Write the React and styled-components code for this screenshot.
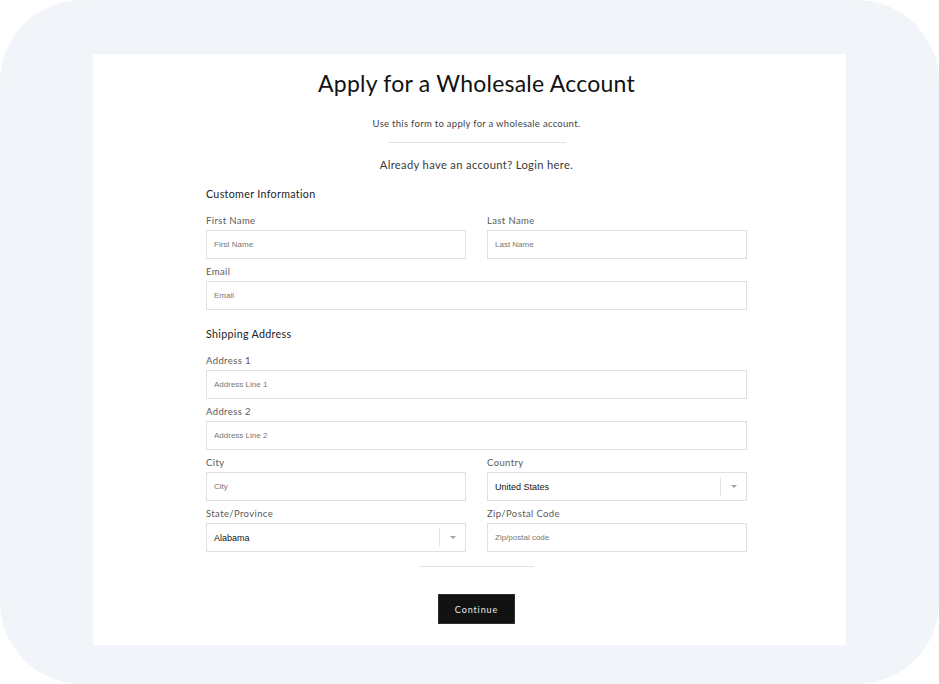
import styled, { createGlobalStyle } from "styled-components";

const GlobalStyle = createGlobalStyle`
  * { box-sizing: border-box; }
  body {
    margin: 0;
    background: #ffffff;
    font-family: Lato, "Open Sans", sans-serif;
  }
`;

const Frame = styled.div`
  width: 939px;
  height: 684px;
  background: #f1f4f8;
  border-radius: 82px;
  padding: 54px 93px 39px 93px;
`;

const Card = styled.main`
  height: 100%;
  background: #ffffff;
  padding: 14px 99px 0 113px;
  display: flex;
  flex-direction: column;
`;

const Header = styled.header`
  display: flex;
  flex-direction: column;
  align-items: center;
`;

const Title = styled.h1`
  margin: 0;
  font-size: 23px;
  line-height: 30px;
  font-weight: 400;
  color: #121212;
  letter-spacing: 0.01em;
`;

const Subtitle = styled.p`
  margin: 19px 0 0;
  font-size: 9.5px;
  line-height: 14px;
  color: #444;
  letter-spacing: 0.03em;
`;

const Divider = styled.hr`
  width: ${(p) => p.$w}px;
  margin: ${(p) => p.$m};
  border: 0;
  border-top: 1px solid #e3e3e3;
`;

const LoginText = styled.p`
  margin: 0;
  font-size: 11.2px;
  line-height: 16px;
  color: #3a3a3a;
  letter-spacing: 0.03em;
`;

const Form = styled.form`
  display: flex;
  flex-direction: column;
`;

const SectionTitle = styled.h2`
  margin: ${(p) => p.$top}px 0 12px;
  font-size: 10.7px;
  line-height: 16px;
  font-weight: 400;
  color: #222;
  letter-spacing: 0.03em;
`;

const Grid = styled.div`
  display: grid;
  grid-template-columns: 1fr 1fr;
  column-gap: 21px;
  row-gap: 6px;
`;

const Field = styled.label`
  display: flex;
  flex-direction: column;
  gap: 2px;
  grid-column: ${(p) => (p.$wide ? "1 / -1" : "auto")};
`;

const LabelText = styled.span`
  font-size: 9.5px;
  line-height: 14px;
  color: #5a5a5a;
  letter-spacing: 0.04em;
`;

const Input = styled.input`
  height: 29px;
  width: 100%;
  border: 1px solid #e0e0e0;
  border-radius: 0;
  padding: 0 7px;
  font-family: "Liberation Sans", Arial, sans-serif;
  font-size: 8px;
  color: #121212;
  background: #fff;
  outline: none;

  &::placeholder {
    color: #777;
  }
`;

const SelectBox = styled.div`
  height: 29px;
  border: 1px solid #e0e0e0;
  display: flex;
  align-items: center;
  padding-left: 7px;
  font-family: "Liberation Sans", Arial, sans-serif;
  font-size: 9px;
  color: #121212;
`;

const SelectValue = styled.span`
  flex: 1;
`;

const SelectControl = styled.span`
  width: 26px;
  height: 19px;
  border-left: 1px solid #e2e2e2;
  display: flex;
  align-items: center;
  justify-content: center;
`;

const Caret = styled.span`
  width: 0;
  height: 0;
  border-left: 3px solid transparent;
  border-right: 3px solid transparent;
  border-top: 3px solid #a0a0a0;
`;

const Actions = styled.div`
  display: flex;
  flex-direction: column;
  align-items: center;
`;

const Button = styled.button`
  width: 77px;
  height: 30px;
  background: #121212;
  border: 1px solid #2e2e2e;
  color: #e8e8e8;
  font-family: Lato, "Open Sans", sans-serif;
  font-size: 9px;
  letter-spacing: 0.1em;
  cursor: pointer;
`;

const TextField = ({ label, placeholder, wide }) => (
  <Field $wide={wide}>
    <LabelText>{label}</LabelText>
    <Input placeholder={placeholder} />
  </Field>
);

const SelectField = ({ label, value }) => (
  <Field>
    <LabelText>{label}</LabelText>
    <SelectBox>
      <SelectValue>{value}</SelectValue>
      <SelectControl>
        <Caret />
      </SelectControl>
    </SelectBox>
  </Field>
);

export default function App() {
  return (
    <>
      <GlobalStyle />
      <Frame>
        <Card>
          <Header>
            <Title>Apply for a Wholesale Account</Title>
            <Subtitle>Use this form to apply for a wholesale account.</Subtitle>
            <Divider $w={178} $m="11px 0 14px" />
            <LoginText>Already have an account? Login here.</LoginText>
          </Header>
          <Form onSubmit={(e) => e.preventDefault()}>
            <SectionTitle $top={13}>Customer Information</SectionTitle>
            <Grid>
              <TextField label="First Name" placeholder="First Name" />
              <TextField label="Last Name" placeholder="Last Name" />
              <TextField label="Email" placeholder="Email" wide />
            </Grid>
            <SectionTitle $top={16}>Shipping Address</SectionTitle>
            <Grid>
              <TextField label="Address 1" placeholder="Address Line 1" wide />
              <TextField label="Address 2" placeholder="Address Line 2" wide />
              <TextField label="City" placeholder="City" />
              <SelectField label="Country" value="United States" />
              <SelectField label="State/Province" value="Alabama" />
              <TextField label="Zip/Postal Code" placeholder="Zip/postal code" />
            </Grid>
            <Actions>
              <Divider $w={115} $m="14px 0 27px" />
              <Button type="submit">Continue</Button>
            </Actions>
          </Form>
        </Card>
      </Frame>
    </>
  );
}
